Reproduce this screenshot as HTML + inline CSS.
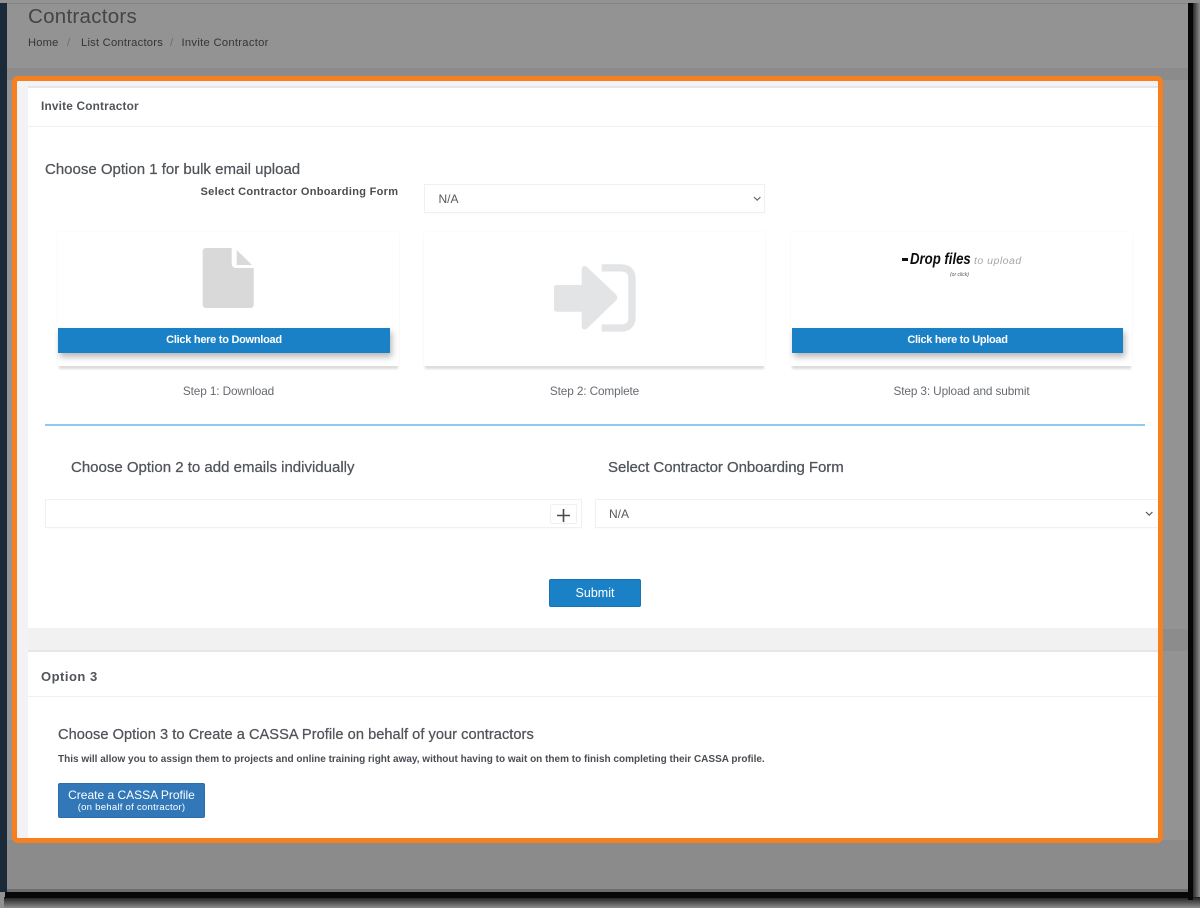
<!DOCTYPE html>
<html lang="en">
<head>
<meta charset="utf-8">
<title>Invite Contractor</title>
<style>
html,body{margin:0;padding:0}
body{width:1200px;height:908px;position:relative;overflow:hidden;background:#8e8e8e;font-family:"Liberation Sans",sans-serif;color:#4b4f56}
.a{position:absolute;box-sizing:border-box}
.t{position:absolute;white-space:nowrap;line-height:1}
.h{font-size:15px;color:#50545a;-webkit-text-stroke:.25px #50545a}
.card{position:absolute;box-sizing:border-box;background:#fff;box-shadow:0 4px 2px -1px #dcdcdc,0 0 3px rgba(0,0,0,.03);height:134px;top:232px}
.btn{position:absolute;background:#1b81c7;color:#fff;font-size:11px;font-weight:bold;text-align:center;box-shadow:2px 4px 6px rgba(0,0,0,.28);height:25px;line-height:24px;top:328px}
.step{font-size:11.8px;letter-spacing:-.12px;color:#666a70;text-align:center}
.sel{position:absolute;box-sizing:border-box;background:#fff;border:1px solid #f0f0f0;box-shadow:0 1px 1px rgba(0,0,0,.02)}
</style>
</head>
<body>
<!-- screenshot frame -->
<div class="a" style="left:0;top:0;width:1200px;height:908px;background:#929292"></div>
<div class="a" style="left:0;top:3px;width:7px;height:889px;background:#1b2a38"></div>
<div class="a" style="left:1192px;top:3px;width:8px;height:905px;background:linear-gradient(90deg,#1c1c1c,#8c8c8c)"></div>
<div class="a" style="left:4px;top:897px;width:1196px;height:11px;background:linear-gradient(180deg,#1c1c1c,#8c8c8c)"></div>
<div class="a" style="left:1188px;top:3px;width:5px;height:897px;background:#060606"></div>
<div class="a" style="left:5px;top:892px;width:1188px;height:6px;background:#080808"></div>
<div class="a" style="left:7px;top:3px;width:1181px;height:889px;background:#939393"></div>
<div class="a" style="left:7px;top:68px;width:1181px;height:12px;background:#8b8b8b"></div>
<div class="a" style="left:7px;top:840px;width:1181px;height:52px;background:#8b8b8b"></div>
<div class="a" style="left:7px;top:889px;width:1181px;height:3px;background:#6d6d6d"></div>
<div class="a" style="left:7px;top:3px;width:1181px;height:1px;background:#858585"></div>

<div class="t" style="left:28px;top:7px;font-size:20.5px;letter-spacing:.28px;color:#454545">Contractors</div>
<div class="t" style="left:28px;top:38px;font-size:11.2px;letter-spacing:.15px;color:#353535">Home</div>
<div class="t" style="left:67px;top:38px;font-size:11.2px;color:#6c6c6c">/</div>
<div class="t" style="left:81px;top:38px;font-size:11.2px;letter-spacing:.23px;color:#353535">List Contractors</div>
<div class="t" style="left:170px;top:38px;font-size:11.2px;color:#6c6c6c">/</div>
<div class="t" style="left:181.5px;top:38px;font-size:11.2px;letter-spacing:.3px;color:#353535">Invite Contractor</div>

<!-- orange highlighted box -->
<div class="a" style="left:11.5px;top:75.5px;width:1151.5px;height:767.5px;background:#f3f3f5;border:5px solid #f6801f;border-radius:6px"></div>
<div class="a" style="left:28px;top:86px;width:1130px;height:2px;background:#e3e7ec"></div>
<div class="a" style="left:28px;top:88px;width:1130px;height:540px;background:#fff"></div>
<div class="a" style="left:28px;top:126px;width:1130px;height:1px;background:#f1f1f1"></div>
<div class="a" style="left:28px;top:628px;width:1130px;height:22px;background:#f1f1f1"></div>
<div class="a" style="left:28px;top:650px;width:1130px;height:2px;background:#e4e6e9"></div>
<div class="a" style="left:28px;top:652px;width:1130px;height:186px;background:#fff"></div>
<div class="a" style="left:28px;top:696px;width:1130px;height:1px;background:#f1f1f3"></div>
<div class="a" style="left:1163px;top:629px;width:25px;height:22px;background:#8c8c8c"></div>

<div class="t" style="left:41px;top:101px;font-size:11.8px;font-weight:bold;letter-spacing:.2px;color:#50545a">Invite Contractor</div>
<div class="t h" style="left:45px;top:161.5px">Choose Option 1 for bulk email upload</div>
<div class="t" style="left:200.5px;top:187px;font-size:11px;font-weight:bold;letter-spacing:.31px;color:#4a4d52">Select Contractor Onboarding Form</div>

<div class="sel" style="left:424px;top:184px;width:341px;height:29px"></div>
<div class="t" style="left:438.5px;top:192.5px;font-size:12px;color:#55585d">N/A</div>
<svg class="a" style="left:752px;top:195px" width="11" height="8" viewBox="0 0 11 8"><path d="M2 2l3.200 3.200L8.400 2" fill="none" stroke="#666" stroke-width="1.200"/></svg>

<!-- cards -->
<div class="card" style="left:58px;width:341px"></div>
<div class="card" style="left:424px;width:341px"></div>
<div class="card" style="left:791px;width:341px"></div>

<svg class="a" style="left:202px;top:247px" width="53" height="62" viewBox="0 0 53 62">
<path d="M3.700 1H29.700V17a4 4 0 0 0 4 4H51.700V58a3 3 0 0 1-3 3H3.700a3 3 0 0 1-3-3V4a3 3 0 0 1 3-3z" fill="#d9d9d9"/>
<path d="M34.700 3L50 18H34.700z" fill="#d9d9d9"/>
</svg>

<svg class="a" style="left:554px;top:264px" width="84" height="68" viewBox="0 0 84 68">
<path d="M3 21H27.700V6Q27.700 2 30.500 2Q32 2 33.500 3.500L62 30.500Q64.500 33.500 62 36.500L33.500 64Q32 65.500 30.500 65.500Q27.700 65.500 27.700 61V47.700H3Q0 47.700 0 44.700V24Q0 21 3 21z" fill="#e3e4e6"/>
<path d="M47.700 3.900H67Q78 3.900 78 15V53Q78 64 67 64H47.700" fill="none" stroke="#e3e4e6" stroke-width="7.300"/>
</svg>

<div class="t" style="left:910px;top:252px;font-size:15.500px;font-weight:bold;font-style:italic;color:#0d0d0d;transform:scaleX(.85);transform-origin:left top">Drop files</div>
<div class="a" style="left:902px;top:258px;width:6px;height:2.500px;background:#111"></div>
<div class="t" style="left:974px;top:256px;font-size:10.500px;font-style:italic;color:#a5a5a5;letter-spacing:.5px">to upload</div>
<div class="t" style="left:950px;top:273px;font-size:5px;font-style:italic;color:#555">(or click)</div>

<div class="btn" style="left:58px;width:332px;letter-spacing:-.27px">Click here to Download</div>
<div class="btn" style="left:792px;width:331px;letter-spacing:-.3px">Click here to Upload</div>

<div class="t step" style="left:58px;width:341px;top:385.500px">Step 1: Download</div>
<div class="t step" style="left:424px;width:341px;top:385.500px">Step 2: Complete</div>
<div class="t step" style="left:791px;width:341px;top:385.500px">Step 3: Upload and submit</div>

<div class="a" style="left:45px;top:424px;width:1100px;height:1.500px;background:#8fcbf0"></div>

<div class="t h" style="left:71px;top:459.500px">Choose Option 2 to add emails individually</div>
<div class="t h" style="left:608px;top:459.500px;letter-spacing:-.06px">Select Contractor Onboarding Form</div>

<div class="sel" style="left:45px;top:499px;width:537px;height:29px"></div>
<div class="a" style="left:550px;top:504px;width:27px;height:20px;background:#fff;border:1px solid #f0f0f0;border-radius:2px"></div>
<svg class="a" style="left:556px;top:508px" width="15" height="15" viewBox="0 0 15 15"><path d="M7.500 1v13M1 7.500h13" stroke="#4a4a4a" stroke-width="1.600" fill="none"/></svg>

<div class="sel" style="left:595px;top:499px;width:563px;height:29px;border-right:0"></div>
<div class="t" style="left:609px;top:507.500px;font-size:12px;color:#55585d">N/A</div>
<svg class="a" style="left:1144px;top:510px" width="11" height="8" viewBox="0 0 11 8"><path d="M2 2l3.200 3.200L8.400 2" fill="none" stroke="#555" stroke-width="1.200"/></svg>

<div class="a" style="left:549px;top:579px;width:92px;height:28px;background:#1b81c7;border-radius:2px;border:1px solid #1773b3;color:#fff;font-size:12.500px;text-align:center;line-height:26px">Submit</div>

<div class="t" style="left:41px;top:669.500px;font-size:13px;font-weight:bold;letter-spacing:.5px;color:#50545a">Option 3</div>
<div class="t h" style="left:58px;top:728px;font-size:14.600px;letter-spacing:.04px">Choose Option 3 to Create a CASSA Profile on behalf of your contractors</div>
<div class="t" style="left:58px;top:754.500px;font-size:10px;font-weight:bold;color:#4a4d52">This will allow you to assign them to projects and online training right away, without having to wait on them to finish completing their CASSA profile.</div>

<div class="a" style="left:58px;top:783px;width:147px;height:35px;background:#3278b9;border:1px solid #2b6ea9;border-radius:2px;color:#fff;text-align:center">
<div style="font-size:12px;line-height:13px;margin-top:4.500px">Create a CASSA Profile</div>
<div style="font-size:9.600px;letter-spacing:.23px;line-height:12px">(on behalf of contractor)</div>
</div>
</body>
</html>
